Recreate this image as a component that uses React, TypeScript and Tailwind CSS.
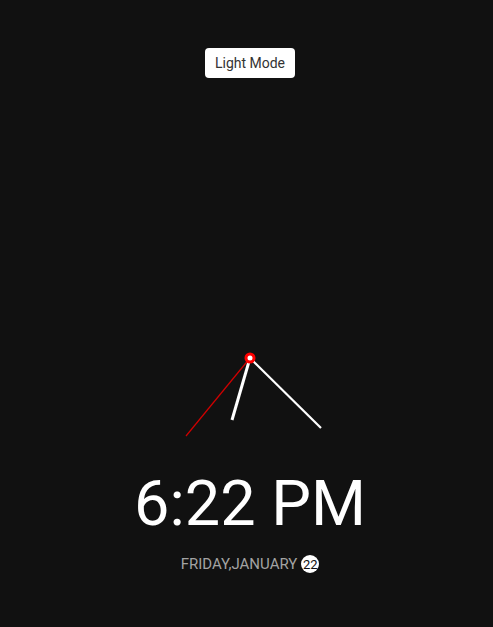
import React from 'react';

const Clock: React.FC = () => {
  // hands drawn from the centre (100,100)
  return (
    <svg className="mt-[180px] block" width={200} height={200} viewBox="0 0 200 200">
      <line x1={100} y1={100} x2={82} y2={162} stroke="#ffffff" strokeWidth={3} />
      <line x1={100} y1={100} x2={171} y2={170} stroke="#ffffff" strokeWidth={2.2} />
      <line x1={100} y1={100} x2={36} y2={178} stroke="#d00000" strokeWidth={1.2} />
      <circle cx={100} cy={100} r={4} fill="#ffffff" stroke="#ff0000" strokeWidth={3} />
    </svg>
  );
};

export default function App() {
  return (
    <div className="min-h-screen w-full overflow-hidden bg-[#111111]" style={{ fontFamily: 'Roboto, "Liberation Sans", sans-serif' }}>
      <div className="w-[500px] flex flex-col items-center">
        <button className="mt-[48px] h-[30px] w-[90px] rounded bg-white text-[14px] text-[#333333]">
          Light Mode
        </button>

        <Clock />

        <div className="mt-[14px] text-[63px] leading-none text-white">6:22 PM</div>

        <div className="mt-[20px] flex items-center text-[15px] leading-none text-[#a3a3a3] uppercase">
          <span>Friday,January</span>
          <span className="ml-[4px] flex h-[18px] w-[18px] items-center justify-center rounded-full bg-white text-[13px] text-[#111111]">
            22
          </span>
        </div>
      </div>
    </div>
  );
}
